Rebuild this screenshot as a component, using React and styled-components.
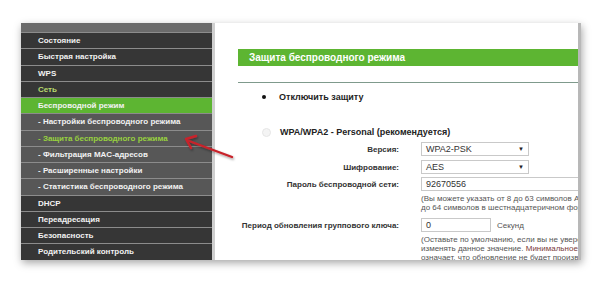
import React from 'react';
import styled, { createGlobalStyle } from 'styled-components';

const GlobalStyle = createGlobalStyle`
    html, body {
        margin: 0;
        padding: 0;
        background: #fff;
    }
    body {
        width: 600px;
        height: 281px;
        overflow: hidden;
        font-family: "Liberation Sans", Arial, sans-serif;
    }
`

// page and frame
const Page = styled.div`
    position: relative;
    width: 600px;
    height: 281px;
    padding: 23px 0 0 21px;
    box-sizing: border-box;
`

const Frame = styled.div`
    display: flex;
    width: 560px;
    height: 237px;
    box-sizing: border-box;
    border-right: 3px solid #b8b8b8;
    box-shadow: 1px 3px 8px rgba(0, 0, 0, 0.35);
    overflow: hidden;
`

// sidebar menu
const Sidebar = styled.div`
    width: 191px;
    flex-shrink: 0;
    background: #3a3a3a;
    border-right: 3px solid #cfcfcf;
    display: flex;
    flex-direction: column;
`

const SidebarHead = styled.div`
    height: 9px;
    flex-shrink: 0;
    background: #6b6b6b;
`

const MenuItem = styled.div`
    height: 15.25px;
    flex-shrink: 0;
    border-top: 1px solid #8c8c8c;
    padding-left: 17px;
    font-size: 8px;
    font-weight: bold;
    line-height: 15px;
    white-space: nowrap;
    overflow: hidden;
    color: ${({ tone }) => (tone === 'lime' ? '#b9da6e' : tone === 'green' ? '#97d13f' : '#f2f2f2')};
    background: ${({ active, sub }) => (active ? '#5db532' : sub ? '#575757' : '#363636')};
`

// content side
const Content = styled.div`
    flex: 1;
    min-width: 0;
    background: #fff;
    padding: 26px 0 0 23px;
    overflow: hidden;
`

const TitleBar = styled.div`
    height: 17px;
    background: #5db532;
    color: #fff;
    font-size: 10px;
    font-weight: bold;
    line-height: 17px;
    padding-left: 11px;
    white-space: nowrap;
`

const Divider = styled.div`
    height: 1px;
    margin-top: 16px;
    background: #7f9a8c;
`

const RadioRow = styled.div`
    display: flex;
    align-items: center;
    height: 14px;
    margin-top: ${({ top }) => top}px;
    padding-left: ${({ indent }) => indent}px;
    gap: ${({ space }) => space}px;
    font-size: 9px;
    font-weight: bold;
    color: #222;
    white-space: nowrap;
`

const Radio = styled.span`
    width: ${({ checked }) => (checked ? 4 : 7)}px;
    height: ${({ checked }) => (checked ? 4 : 7)}px;
    border-radius: 50%;
    background: ${({ checked }) => (checked ? '#111' : '#f4f4f4')};
    border: ${({ checked }) => (checked ? 'none' : '1px solid #e6e6e6')};
    flex-shrink: 0;
`

const Form = styled.div`
    display: grid;
    grid-template-columns: 161px auto;
    column-gap: 22px;
    margin-top: 3px;
    align-items: center;
`

const Label = styled.div`
    text-align: right;
    font-size: 8px;
    font-weight: bold;
    color: #333;
    white-space: nowrap;
    direction: rtl;
    unicode-bidi: plaintext;
    margin-top: ${({ top }) => top || 0}px;
`

const Field = styled.div`
    display: flex;
    align-items: center;
    gap: 6px;
    margin-top: ${({ top }) => top || 0}px;
    white-space: nowrap;
`

const Box = styled.div`
    width: ${({ w }) => w}px;
    height: 14px;
    box-sizing: border-box;
    border: 1px solid #c9c9c9;
    padding: 0 4px;
    display: flex;
    align-items: center;
    justify-content: space-between;
    font-size: 9px;
    color: #333;
    flex-shrink: 0;
`

const Caret = styled.span`
    font-size: 6px;
    color: #222;
`

const Unit = styled.span`
    font-size: 8px;
    color: #555;
`

const Help = styled.div`
    grid-column: 2;
    margin-top: ${({ top }) => top}px;
    font-size: 8px;
    line-height: 9px;
    color: #555;
    white-space: nowrap;
`

const Dim = styled.span`
    color: #7a3a3a;
`

const Arrow = styled.svg`
    position: absolute;
    left: 180px;
    top: 132px;
    overflow: visible;
`

const items = [
    { text: 'Состояние' },
    { text: 'Быстрая настройка' },
    { text: 'WPS' },
    { text: 'Сеть', tone: 'lime' },
    { text: 'Беспроводной режим', active: true },
    { text: '- Настройки беспроводного режима', sub: true },
    { text: '- Защита беспроводного режима', sub: true, tone: 'green' },
    { text: '- Фильтрация MAC-адресов', sub: true },
    { text: '- Расширенные настройки', sub: true },
    { text: '- Статистика беспроводного режима', sub: true },
    { text: 'DHCP' },
    { text: 'Переадресация' },
    { text: 'Безопасность' },
    { text: 'Родительский контроль' },
];

const App = () => (
    <Page>
        <GlobalStyle />
        <Frame>
            <Sidebar>
                <SidebarHead />
                {items.map((it) => (
                    <MenuItem key={it.text} active={it.active} sub={it.sub} tone={it.tone}>
                        {it.text}
                    </MenuItem>
                ))}
            </Sidebar>
            <Content>
                <TitleBar>Защита беспроводного режима</TitleBar>
                <Divider />
                <RadioRow top={7} indent={24} space={13}>
                    <Radio checked />
                    Отключить защиту
                </RadioRow>
                <RadioRow top={21} indent={24} space={9}>
                    <Radio />
                    WPA/WPA2 - Personal (рекомендуется)
                </RadioRow>
                <Form>
                    <Label>Версия:</Label>
                    <Field>
                        <Box w={108}>WPA2-PSK<Caret>▼</Caret></Box>
                    </Field>
                    <Label top={4}>Шифрование:</Label>
                    <Field top={4}>
                        <Box w={108}>AES<Caret>▼</Caret></Box>
                    </Field>
                    <Label top={3}>Пароль беспроводной сети:</Label>
                    <Field top={3}>
                        <Box w={170}>92670556</Box>
                    </Field>
                    <Help top={3}>
                        (Вы можете указать от 8 до 63 символов ASCII или от 8<br />
                        до 64 символов в шестнадцатеричном формате.)
                    </Help>
                    <Label top={6}>Период обновления группового ключа:</Label>
                    <Field top={6}>
                        <Box w={70}>0</Box>
                        <Unit>Секунд</Unit>
                    </Field>
                    <Help top={3}>
                        (Оставьте по умолчанию, если вы не уверены, что хотите<br />
                        изменять данное значение. <Dim>Минимальное</Dim> значение<br />
                        означает, что обновление не будет производиться.)
                    </Help>
                </Form>
            </Content>
        </Frame>
        <Arrow width="60" height="30" viewBox="0 0 60 30">
            <defs>
                <filter id="sh" x="-20%" y="-40%" width="140%" height="180%">
                    <feDropShadow dx="1" dy="1.5" stdDeviation="1" floodColor="#000" floodOpacity="0.4" />
                </filter>
            </defs>
            <g filter="url(#sh)" stroke="#c8242b" strokeLinecap="round" strokeLinejoin="round" fill="none">
                <path d="M52 25 L9 9" strokeWidth="2.4" />
                <path d="M6 7 L16 4 M6 7 L11 16" strokeWidth="2.4" />
            </g>
        </Arrow>
    </Page>
);

export default App;
